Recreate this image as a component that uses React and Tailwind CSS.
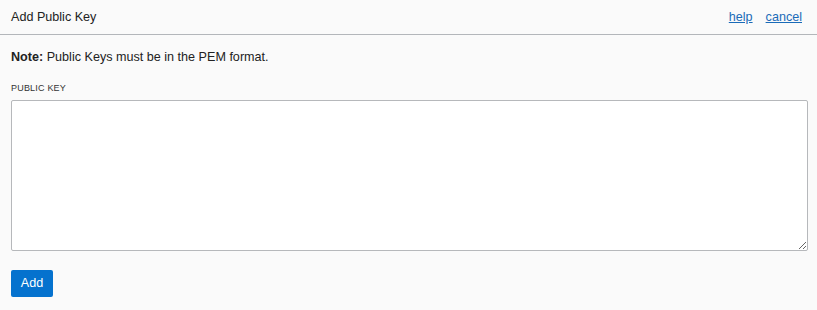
import React from 'react';

const App = () => {
  return (
    <div className="w-[817px] h-[310px] bg-[#fafafa] font-['Liberation_Sans',Arial,sans-serif] text-[#161513]">
      {/* Header */}
      <div className="h-[35px] flex items-center justify-between pl-[11px] pr-[15px] border-b border-[#b3b6ba]">
        <h1 className="text-[12.6px] text-[#222]">Add Public Key</h1>
        <div className="flex gap-[13px] text-[12.6px]">
          <a href="#" className="text-[#1a6bb8] underline">help</a>
          <a href="#" className="text-[#1a6bb8] underline">cancel</a>
        </div>
      </div>

      {/* Body */}
      <div className="px-[11px] pt-[13px]">
        <p className="text-[12.6px] text-[#222]">
          <span className="font-bold">Note:</span> Public Keys must be in the PEM format.
        </p>
        <label className="block mt-[15px] mb-[5px] text-[9px] uppercase text-[#333] tracking-[0.2px]">
          Public Key
        </label>
        <textarea className="block w-[797px] h-[151px] bg-white border border-[#b6b8bb] rounded-[2px]"></textarea>
        <button className="mt-[19px] h-[27px] w-[42px] rounded-[2px] bg-[#0572ce] text-white text-[12.6px]">
          Add
        </button>
      </div>
    </div>
  );
};

export default App;
